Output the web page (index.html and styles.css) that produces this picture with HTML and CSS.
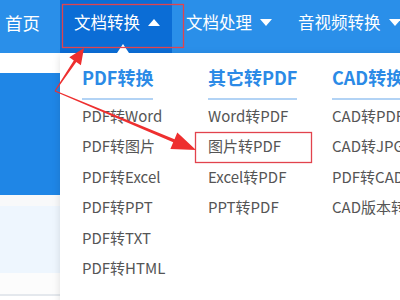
FILE: index.html
```html
<!DOCTYPE html>
<html lang="zh-CN">
<head>
    <meta charset="UTF-8">
    <title>文档转换</title>
    <link rel="stylesheet" href="styles.css">
</head>
<body>
    <div class="nav">
        <div class="nav-item first">首页</div>
        <div class="nav-item active">文档转换<span class="tri up"></span></div>
        <div class="nav-item">文档处理<span class="tri down"></span></div>
        <div class="nav-item">音视频转换<span class="tri down"></span></div>
    </div>

    <div class="page">
        <div class="side">
            <div class="side-gap"></div>
            <div class="side-banner"></div>
            <div class="side-grey"></div>
            <div class="side-light"></div>
            <div class="side-white"></div>
            <div class="side-line"></div>
        </div>

        <div class="menu">
            <span class="menu-arrow"></span>
            <div class="col col1">
                <div class="col-title">PDF转换</div>
                <ul>
                    <li>PDF转Word</li>
                    <li>PDF转图片</li>
                    <li>PDF转Excel</li>
                    <li>PDF转PPT</li>
                    <li>PDF转TXT</li>
                    <li>PDF转HTML</li>
                </ul>
            </div>
            <div class="col col2">
                <div class="col-title">其它转PDF</div>
                <ul>
                    <li>Word转PDF</li>
                    <li>图片转PDF</li>
                    <li>Excel转PDF</li>
                    <li>PPT转PDF</li>
                </ul>
            </div>
            <div class="col col3">
                <div class="col-title">CAD转换</div>
                <ul>
                    <li>CAD转PDF</li>
                    <li>CAD转JPG</li>
                    <li>PDF转CAD</li>
                    <li>CAD版本转换</li>
                </ul>
            </div>
        </div>
    </div>

    <!-- annotation marks -->
    <svg class="marks" width="400" height="300" viewBox="0 0 400 300">
        <rect x="62.5" y="4.5" width="121" height="43" fill="none" stroke="#e2434d" stroke-width="1.3"/>
        <rect x="195.5" y="132.5" width="116" height="30" fill="none" stroke="#e2434d" stroke-width="1.3"/>
        <polygon fill="#ee2f2f" points="55.4,91.3 76.3,62.1 80.9,65.2 84,48 69.3,57.3 73.8,60.4 54.6,90.7"/>
        <polygon fill="#ee2f2f" points="54.8,91.6 173.2,142.3 170.4,149.0 196,150 177.3,132.4 174.5,139.2 55.2,90.4"/>
    </svg>
</body>
</html>
```

FILE: styles.css
```css
body {
    margin: 0;
    width: 400px;
    height: 300px;
    overflow: hidden;
    position: relative;
    font-family: "Noto Sans CJK SC", "Noto Sans", sans-serif;
    background: #fff;
}
.nav {
    display: flex;
    height: 53px;
    background: #2a8fe9;
    color: #fff;
}
.nav-item {
    display: flex;
    align-items: center;
    height: 44px;
    padding: 0 12px 9px 14px;
    font-size: 16.5px;
    white-space: nowrap;
}
.nav-item.first {
    padding-left: 5px;
    padding-right: 20px;
    font-size: 17.5px;
}
.nav-item.active {
    background: #0b6dd6;
}
.tri {
    display: inline-block;
    width: 0;
    height: 0;
    margin-left: 8px;
    border-left: 6px solid transparent;
    border-right: 6px solid transparent;
}
.tri.up {
    border-bottom: 7px solid #fff;
}
.tri.down {
    border-top: 7px solid #fff;
}
.page {
    display: flex;
    position: relative;
}
.side {
    width: 60px;
}
.side-gap {
    height: 20px;
}
.side-banner {
    height: 122px;
    background: #1f86e6;
}
.side-grey {
    height: 11px;
    background: #f8f9fa;
}
.side-light {
    height: 67px;
    background: #eef6fe;
}
.side-white {
    height: 21px;
    background: #fcfcfc;
}
.side-line {
    height: 2px;
    background: #e4e8ed;
}
.menu {
    position: absolute;
    left: 60px;
    top: 0;
    width: 380px;
    height: 260px;
    display: grid;
    grid-template-columns: 126px 124px 1fr;
    padding: 11px 0 0 22px;
    background: #fff;
    box-shadow: 0 2px 8px rgba(0, 0, 0, 0.12);
}
.menu-arrow {
    position: absolute;
    left: 57px;
    top: -9px;
    width: 0;
    height: 0;
    border-left: 6px solid transparent;
    border-right: 6px solid transparent;
    border-bottom: 9px solid #fff;
}
.col-title {
    display: inline-block;
    font-size: 18px;
    font-weight: bold;
    color: #2b8ae6;
    line-height: 26px;
    padding-bottom: 8px;
    border-bottom: 2px solid #b2d3f5;
    white-space: nowrap;
}
.col ul {
    list-style: none;
    margin: 1px 0 0;
    padding: 0;
}
.col li {
    font-size: 15px;
    line-height: 30.4px;
    color: #555;
    white-space: nowrap;
}
.marks {
    position: absolute;
    left: 0;
    top: 0;
}
```
